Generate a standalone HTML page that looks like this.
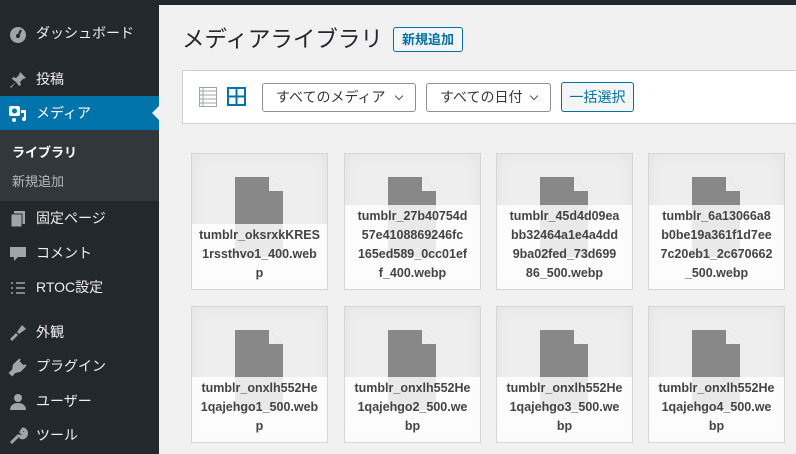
<!DOCTYPE html>
<html><head><meta charset="utf-8"><style>
*{box-sizing:border-box;margin:0;padding:0}
body{width:796px;height:454px;overflow:hidden;background:#f1f1f1;font-family:"Liberation Sans","Noto Sans CJK JP",sans-serif;position:relative}
.top{position:absolute;left:0;top:0;width:796px;height:5px;background:#23282d}
.side{position:absolute;left:0;top:0;width:159px;height:454px;background:#23282d}
.mi{position:absolute;left:0;width:159px;height:34px;color:#eee;font-size:14px;line-height:34px;padding-left:36px}
.mi svg{position:absolute;left:8px;top:8px}
.cur{background:#0073aa;color:#fff}
.cur:after{content:"";position:absolute;right:0;top:10px;border:7px solid transparent;border-right-color:#f1f1f1}
.sub{position:absolute;left:0;top:130px;width:159px;height:71px;background:#32373c}
.sub div{position:absolute;left:12px;font-size:13px}
h1{position:absolute;left:182px;top:22px;font-size:22.5px;font-weight:400;color:#23282d}
.add{position:absolute;left:393px;top:27px;width:70px;height:25px;border:1px solid #0071a1;background:#f3f5f6;color:#0071a1;font-size:13px;font-weight:700;text-align:center;line-height:23px;border-radius:3px}
.tb{position:absolute;left:182px;top:70px;width:620px;height:54px;background:#fff;border:1px solid #ccd0d4}
.sel{position:absolute;top:83px;height:29px;border:1px solid #8c8f94;border-radius:3px;background:#fff;font-size:14px;color:#32373c;line-height:27px;padding-left:13px}
.sel:after{content:"";position:absolute;right:13px;top:9px;width:5px;height:5px;border-right:1.5px solid #50575e;border-bottom:1.5px solid #50575e;transform:rotate(45deg)}
.btn{position:absolute;left:561px;top:82px;width:73px;height:30px;border:1px solid #0071a1;border-radius:3px;background:#f3f5f6;color:#0071a1;font-size:14px;text-align:center;line-height:28px}
.card{position:absolute;width:137px;height:137px;border:1px solid #d5d5d5;background:#eee;overflow:hidden;box-shadow:inset 0 0 15px rgba(0,0,0,.05)}
.card svg{position:absolute;left:43px;top:23px}
.lab{position:absolute;left:0;right:0;bottom:0;background:rgba(255,255,255,.82);font-size:12.5px;font-weight:700;color:#444;text-align:center;line-height:19px;padding:2px 0 6px;white-space:nowrap}
</style></head><body>
<div class="side">
<div class="mi" style="top:16px"><svg width="20" height="20" viewBox="0 0 20 20"><circle cx="10" cy="11" r="8" fill="#a0a5aa"/><circle cx="10" cy="12" r="2" fill="#23282d"/><path d="M10 12 L13 6" stroke="#23282d" stroke-width="2"/></svg>ダッシュボード</div>
<div class="mi" style="top:62px"><svg width="20" height="20" viewBox="0 0 20 20"><path d="M12 2l6 6-3 1-3 3 1 3-2 1-3-4-5 6-1-1 6-5-4-3 1-2 3 1 3-3z" fill="#a0a5aa"/></svg>投稿</div>
<div class="mi cur" style="top:96px"><svg width="20" height="20" viewBox="0 0 20 20"><rect x="1" y="2" width="11" height="10" rx="2" fill="#fff"/><circle cx="6.5" cy="7" r="2.5" fill="#0073aa"/><path d="M13 6h5v9a2 2 0 1 1-2-2V9h-3z" fill="#fff"/><circle cx="6" cy="16" r="2" fill="#fff"/></svg>メディア</div>
<div class="sub"><div style="top:12px;color:#fff;font-weight:700">ライブラリ</div><div style="top:41px;color:#b4b9be">新規追加</div></div>
<div class="mi" style="top:201px"><svg width="20" height="20" viewBox="0 0 20 20"><rect x="6" y="2" width="11" height="13" fill="#a0a5aa"/><rect x="3" y="5" width="11" height="13" fill="#a0a5aa" stroke="#23282d"/></svg>固定ページ</div>
<div class="mi" style="top:236px"><svg width="20" height="20" viewBox="0 0 20 20"><path d="M2 3h16v10h-8l-4 4v-4H2z" fill="#a0a5aa"/></svg>コメント</div>
<div class="mi" style="top:270px"><svg width="20" height="20" viewBox="0 0 20 20"><path d="M3 5h2M8 5h9M3 10h2M8 10h9M3 15h2M8 15h9" stroke="#a0a5aa" stroke-width="1.5"/></svg>RTOC設定</div>
<div class="mi" style="top:315px"><svg width="20" height="20" viewBox="0 0 20 20"><path d="M14 2l4 4-7 5-2-2zM8 10l2 2-6 6-2-2z" fill="#a0a5aa"/></svg>外観</div>
<div class="mi" style="top:349px"><svg width="20" height="20" viewBox="0 0 20 20"><path d="M4 18l3-3 5-1 4-4-6-6-4 4-1 5-3 3zM12 2l-2 3M18 8l-3 2" stroke="#a0a5aa" stroke-width="2" fill="#a0a5aa"/></svg>プラグイン</div>
<div class="mi" style="top:384px"><svg width="20" height="20" viewBox="0 0 20 20"><circle cx="10" cy="6" r="4" fill="#a0a5aa"/><path d="M2 18c0-5 4-7 8-7s8 2 8 7z" fill="#a0a5aa"/></svg>ユーザー</div>
<div class="mi" style="top:418px"><svg width="20" height="20" viewBox="0 0 20 20"><path d="M3 17l8-8M11 9a4 4 0 1 0 4-6l-2 3 2 2 3-2a4 4 0 0 1-6 5" stroke="#a0a5aa" stroke-width="3" fill="none"/></svg>ツール</div>
</div>
<div class="top"></div>
<h1>メディアライブラリ</h1>
<div class="add">新規追加</div>
<div class="tb"></div>
<svg style="position:absolute;left:199px;top:87px" width="18" height="20" viewBox="0 0 18 20"><rect x="0.5" y="0.5" width="17" height="19" fill="none" stroke="#a0a5aa"/><path d="M1 4h16M1 8h16M1 12h16M1 16h16M4 1v18" stroke="#a0a5aa"/></svg>
<svg style="position:absolute;left:227px;top:87px" width="19" height="19" viewBox="0 0 19 19"><rect x="1" y="1" width="17" height="17" fill="none" stroke="#0073aa" stroke-width="2"/><path d="M9.5 1v17M1 9.5h17" stroke="#0073aa" stroke-width="2"/></svg>
<div class="sel" style="left:262px;width:154px">すべてのメディア</div>
<div class="sel" style="left:426px;width:125px">すべての日付</div>
<div class="btn">一括選択</div>

<div class="card" style="left:191px;top:153px"><svg width="48" height="80" viewBox="0 0 48 80"><path d="M0 0h34l14 14v66H0z" fill="#888"/><path d="M34 0v14h14z" fill="#eee"/></svg><div class="lab">tumblr_oksrxkKRES<br>1rssthvo1_400.web<br>p</div></div>
<div class="card" style="left:344px;top:153px"><svg width="48" height="80" viewBox="0 0 48 80"><path d="M0 0h34l14 14v66H0z" fill="#888"/><path d="M34 0v14h14z" fill="#eee"/></svg><div class="lab">tumblr_27b40754d<br>57e4108869246fc<br>165ed589_0cc01ef<br>f_400.webp</div></div>
<div class="card" style="left:496px;top:153px"><svg width="48" height="80" viewBox="0 0 48 80"><path d="M0 0h34l14 14v66H0z" fill="#888"/><path d="M34 0v14h14z" fill="#eee"/></svg><div class="lab">tumblr_45d4d09ea<br>bb32464a1e4a4dd<br>9ba02fed_73d699<br>86_500.webp</div></div>
<div class="card" style="left:648px;top:153px"><svg width="48" height="80" viewBox="0 0 48 80"><path d="M0 0h34l14 14v66H0z" fill="#888"/><path d="M34 0v14h14z" fill="#eee"/></svg><div class="lab">tumblr_6a13066a8<br>b0be19a361f1d7ee<br>7c20eb1_2c670662<br>_500.webp</div></div>

<div class="card" style="left:191px;top:306px"><svg width="48" height="80" viewBox="0 0 48 80"><path d="M0 0h34l14 14v66H0z" fill="#888"/><path d="M34 0v14h14z" fill="#eee"/></svg><div class="lab">tumblr_onxlh552He<br>1qajehgo1_500.web<br>p</div></div>
<div class="card" style="left:344px;top:306px"><svg width="48" height="80" viewBox="0 0 48 80"><path d="M0 0h34l14 14v66H0z" fill="#888"/><path d="M34 0v14h14z" fill="#eee"/></svg><div class="lab">tumblr_onxlh552He<br>1qajehgo2_500.we<br>bp</div></div>
<div class="card" style="left:496px;top:306px"><svg width="48" height="80" viewBox="0 0 48 80"><path d="M0 0h34l14 14v66H0z" fill="#888"/><path d="M34 0v14h14z" fill="#eee"/></svg><div class="lab">tumblr_onxlh552He<br>1qajehgo3_500.we<br>bp</div></div>
<div class="card" style="left:648px;top:306px"><svg width="48" height="80" viewBox="0 0 48 80"><path d="M0 0h34l14 14v66H0z" fill="#888"/><path d="M34 0v14h14z" fill="#eee"/></svg><div class="lab">tumblr_onxlh552He<br>1qajehgo4_500.we<br>bp</div></div>
</body></html>
